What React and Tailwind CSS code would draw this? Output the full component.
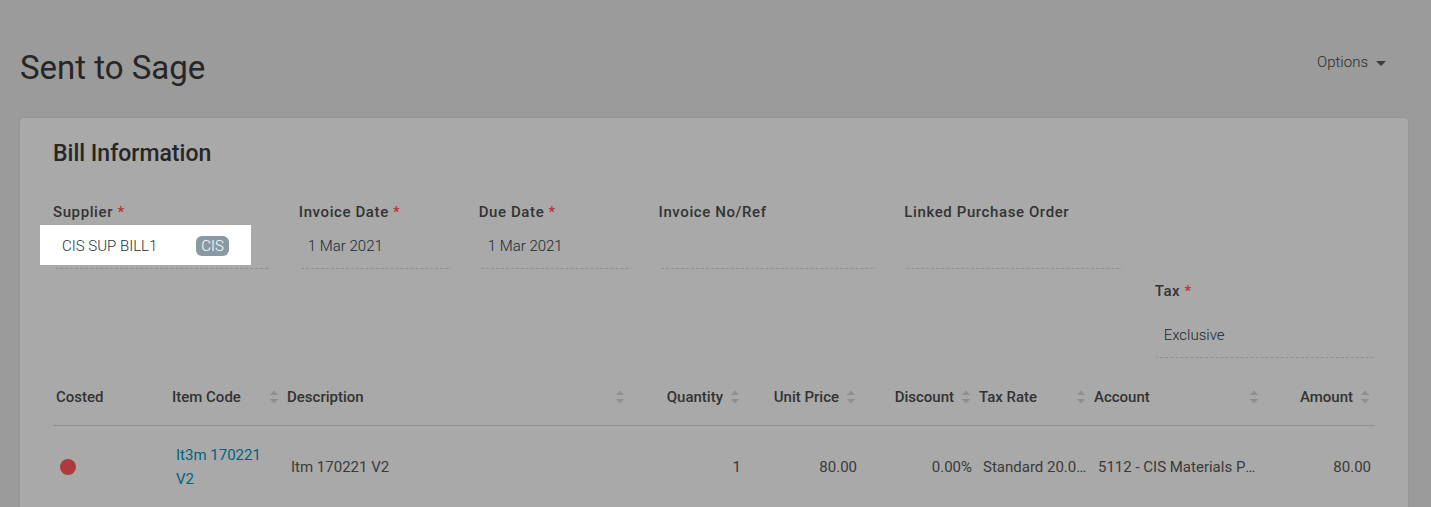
import React from "react";

const columns = [
  { name: "Costed", width: "w-[116px]" },
  { name: "Item Code", width: "w-[115px]", sortable: true },
  { name: "Description", width: "w-[346px]", sortable: true },
  { name: "Quantity", width: "w-[115px]", sortable: true, numeric: true },
  { name: "Unit Price", width: "w-[116px]", sortable: true, numeric: true },
  { name: "Discount", width: "w-[115px]", sortable: true, numeric: true },
  { name: "Tax Rate", width: "w-[115px]", sortable: true },
  { name: "Account", width: "w-[173px]", sortable: true },
  { name: "Amount", width: "w-[111px]", sortable: true, numeric: true },
];

function SortIcon() {
  return (
    <svg viewBox="0 0 8 14" className="h-[14px] w-2 shrink-0 fill-[#8f8f8f]" aria-hidden="true">
      <path d="M4 0.5 8 5H0z" />
      <path d="M4 13.5 0 9h8z" />
    </svg>
  );
}

function Label({ id, required, children }) {
  return (
    <label htmlFor={id} className="block text-[15px] leading-6 font-medium tracking-[0.04em] text-[#333333]">
      {children}
      {required && <span className="text-[#b8323b]"> *</span>}
    </label>
  );
}

function Field({ id, label, value = "", required, tall }) {
  return (
    <div className="min-w-0">
      <Label id={id} required={required}>
        {label}
      </Label>
      <input
        id={id}
        type="text"
        readOnly
        defaultValue={value}
        className={`block w-full rounded border border-transparent border-b-[#909090] border-dashed px-2 text-[15px] font-light text-[#20282f] outline-none ${
          tall ? "mt-2 h-[47px]" : "h-[45px] pb-[2px]"
        }`}
      />
    </div>
  );
}

function SupplierField() {
  return (
    <div className="relative min-w-0">
      <Label id="supplier" required>
        Supplier
      </Label>
      <div className="h-[45px] rounded border border-transparent border-b-[#909090] border-dashed" />
      <div className="absolute top-[25px] -left-[13px] flex h-10 w-[211px] items-center bg-white px-[22px] pt-px">
        <input
          id="supplier"
          type="text"
          readOnly
          defaultValue="CIS SUP BILL1"
          className="w-full min-w-0 text-[15px] font-light text-[#263238] outline-none"
        />
        <span className="rounded-md bg-[#8a9aa3] px-[5px] text-[15px] leading-5 font-light text-white">CIS</span>
      </div>
    </div>
  );
}

export default function App() {
  return (
    <main className="flex min-h-screen flex-col bg-[#9b9b9b] pt-12 pr-[23px] pl-5 font-[Roboto,sans-serif] text-[15px] leading-6 text-[#333333]">
      <header className="flex items-start justify-between pr-[22px]">
        <h1 className="text-[33px] leading-10 text-[#262626]">Sent to Sage</h1>
        <button type="button" className="flex items-center gap-2 pt-[2px] font-light text-[#2c2c2c]">
          Options
          <svg viewBox="0 0 10 5" className="mt-[2px] h-[5px] w-[10px] fill-[#3c3c3c]" aria-hidden="true">
            <path d="M0 0h10L5 5z" />
          </svg>
        </button>
      </header>

      <section className="mt-[30px] flex-1 rounded-t bg-[#a9a9a9] px-[33px] pt-5 shadow-[0_0_1px_1px_#969696]">
        <h2 className="text-[23px] leading-8 font-medium text-[#262626]">Bill Information</h2>

        <form>
          <div className="mt-[30px] grid grid-cols-[219fr_153fr_153fr_219fr_219fr_225fr] gap-x-[27px]">
            <SupplierField />
            <Field id="invoice-date" label="Invoice Date" value="1 Mar 2021" required />
            <Field id="due-date" label="Due Date" value="1 Mar 2021" required />
            <Field id="invoice-no" label="Invoice No/Ref" />
            <Field id="purchase-order" label="Linked Purchase Order" />
          </div>
          <div className="mt-[10px] ml-auto w-1/6">
            <Field id="tax" label="Tax" value="Exclusive" required tall />
          </div>
        </form>

        <table className="mt-[11px] w-full table-fixed border-collapse">
          <thead>
            <tr className="border-b border-[#919191]">
              {columns.map((column) => (
                <th key={column.name} scope="col" className={`${column.width} pt-4 pr-[6px] pb-4 pl-[3px] font-medium`}>
                  <div className={`flex items-center gap-2 ${column.numeric ? "justify-end" : "justify-between"}`}>
                    {column.name}
                    {column.sortable && <SortIcon />}
                  </div>
                </th>
              ))}
            </tr>
          </thead>
          <tbody className="font-normal text-[#3a3a3a]">
            <tr className="*:pt-[17px] *:pr-1 *:pb-4 *:pl-[7px]">
              <td>
                <div className="size-4 rounded-full bg-[#ad3b3b]" />
              </td>
              <td>
                <a href="#item" className="block text-[#006380]">
                  It3m 170221 V2
                </a>
              </td>
              <td>Itm 170221 V2</td>
              <td className="text-right">1</td>
              <td className="text-right">80.00</td>
              <td className="text-right">0.00%</td>
              <td className="whitespace-nowrap">Standard 20.0…</td>
              <td className="whitespace-nowrap">
                5112 - CIS Materials P<span className="[font-kerning:none]">…</span>
              </td>
              <td className="text-right">80.00</td>
            </tr>
          </tbody>
        </table>
      </section>
    </main>
  );
}
